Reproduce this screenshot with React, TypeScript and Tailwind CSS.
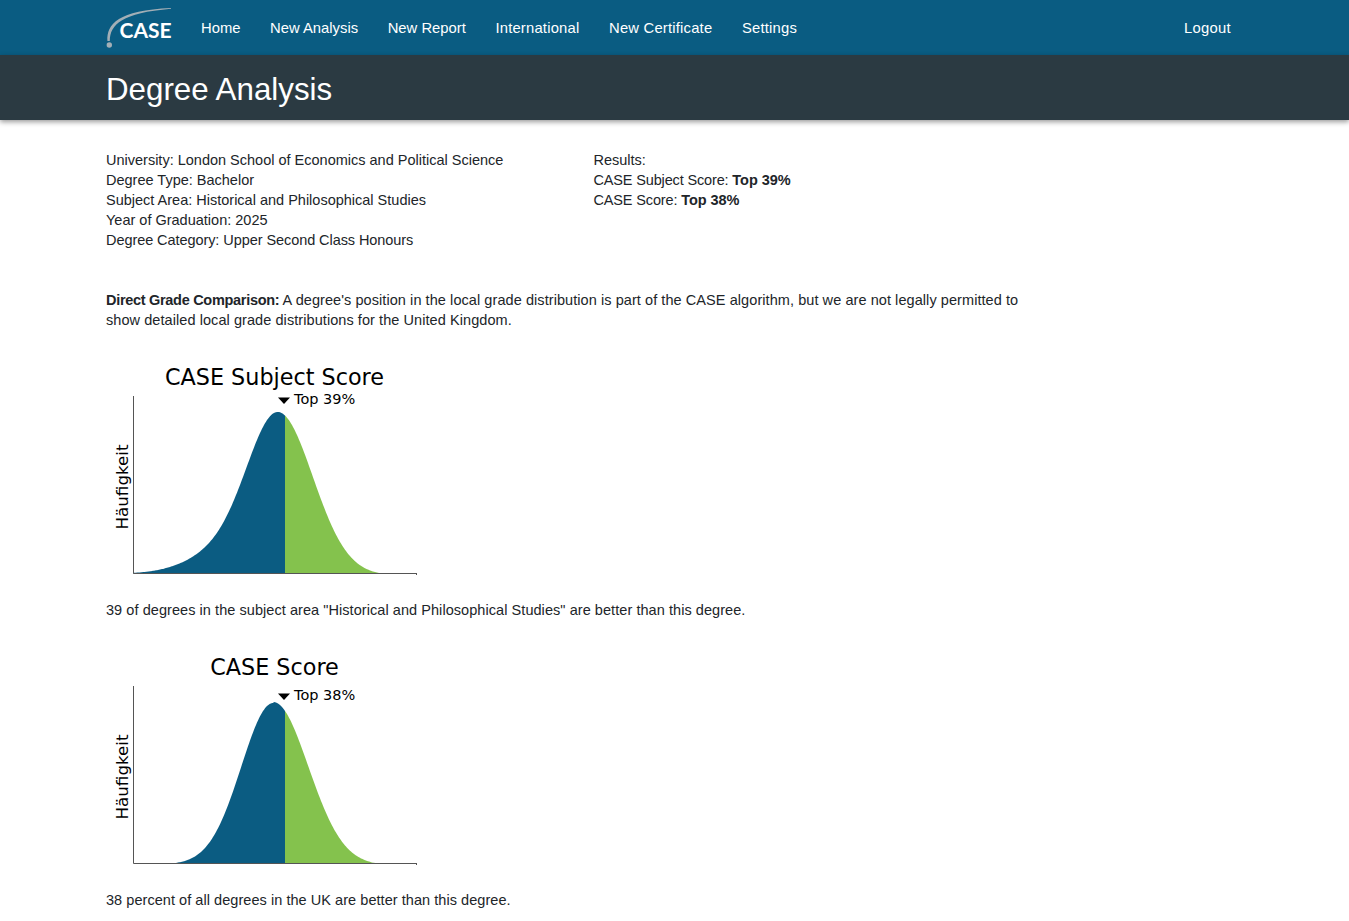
type Curve = { peak: number; sl: number; sr: number; amp: number; ampC: number; ampS: number };

function h(c: Curve, x: number) {
  const dx = x - c.peak;
  if (x >= c.peak) {
    const main = Math.exp((-dx * dx) / (2 * c.sr * c.sr));
    return Math.max(0, (main - 0.012) / 0.988);
  }
  const main = Math.exp((-dx * dx) / (2 * c.sl * c.sl));
  const t = c.amp * Math.exp((-(x - c.ampC) * (x - c.ampC)) / (2 * c.ampS * c.ampS)) * (1 - main);
  return Math.max(0, main + t - (c.amp ? 0 : 0.006));
}

function curve(c: Curve, from: number, to: number) {
  const base = 573.5;
  let d = "";
  for (let x = from; x <= to; x += 1) {
    d += `${d ? "L" : "M"}${x} ${(base - 161.5 * h(c, x)).toFixed(2)}`;
  }
  return d;
}

const c1: Curve = { peak: 277.7, sl: 33, sr: 35, amp: 0.085, ampC: 212, ampS: 32 };
const c2: Curve = { peak: 273.3, sl: 32, sr: 35, amp: 0, ampC: 212, ampS: 32 };

function Chart({ title, label, labelY, c }: { title: string; label: string; labelY: number; c: Curve }) {
  return (
    <svg width="330" height="230" viewBox="100 355 330 230" className="block -ml-[6px]" style={{ fontFamily: '"DejaVu Sans", sans-serif' }}>
      <path d={curve(c, 133, 285) + "L285 573.5L133 573.5Z"} fill="#0b5c82" />
      <path d={curve(c, 285, 395) + "L395 573.5L285 573.5Z"} fill="#84c24d" />
      <path d="M133.5 396V573.5H416.5M416.5 573V575" fill="none" stroke="#555" strokeWidth="1" />
      <text x="274.5" y="385" textAnchor="middle" fontSize="22.3" fill="#000">{title}</text>
      <text x="294" y={labelY} fontSize="14.5" fill="#000">{label}</text>
      <path d={`M278 ${labelY - 6.5}H290L284 ${labelY}Z`} fill="#000" />
      <text transform="translate(127.5 487) rotate(-90)" textAnchor="middle" fontSize="16.7" fill="#000">Häufigkeit</text>
    </svg>
  );
}

export default function App() {
  return (
    <div className="min-h-[921px] bg-white text-[#212529] text-[14.5px] leading-5" style={{ fontFamily: '"Liberation Sans", sans-serif' }}>
      <nav className="h-[55px] bg-[#0a5c82] text-white">
        <div className="ml-[91px] flex h-full w-[1155px] items-center px-[15px] text-[14.8px]">
          <svg width="66" height="42" viewBox="106 7 66 42" className="mr-[29px] shrink-0">
            <path d="M107.4 41C106.6 24 118 10.5 171 8L171 8.7C122 13 110.2 24 109.8 41Z" fill="#a3afb6" />
            <circle cx="109.3" cy="45" r="2.7" fill="#a3afb6" />
            <text x="119.5" y="38.3" fontSize="21" fontWeight="700" fill="#fff" style={{ fontFamily: 'Lato, sans-serif' }}>CASE</text>
          </svg>
          <div className="flex gap-[29.6px]">
            <a>Home</a><a>New Analysis</a><a>New Report</a>
            <a className="tracking-[0.2px]">International</a>
            <a className="tracking-[0.2px]">New Certificate</a>
            <a className="tracking-[0.2px]">Settings</a>
          </div>
          <a className="ml-auto tracking-[0.3px]">Logout</a>
        </div>
      </nav>
      <header className="h-[65px] bg-[#2b3a42] text-white shadow-[0_2px_5px_rgba(0,0,0,0.4)]">
        <div className="ml-[91px] w-[1155px] px-[15px] pt-[15px] text-[31.3px] leading-10">Degree Analysis</div>
      </header>
      <main className="ml-[91px] w-[1155px] px-[15px] pt-[30px]">
        <div className="flex">
          <div className="w-[487.5px]">
            <div>University: London School of Economics and Political Science</div>
            <div>Degree Type: Bachelor</div>
            <div>Subject Area: Historical and Philosophical Studies</div>
            <div>Year of Graduation: 2025</div>
            <div className="tracking-[-0.07px]">Degree Category: Upper Second Class Honours</div>
          </div>
          <div>
            <div>Results:</div>
            <div><span className="tracking-[-0.15px]">CASE Subject Score: </span><b className="tracking-[-0.05px]">Top 39%</b></div>
            <div><span className="tracking-[-0.15px]">CASE Score: </span><b className="tracking-[-0.05px]">Top 38%</b></div>
          </div>
        </div>
        <p className="mt-10 w-[925px] tracking-[0.07px]"><b className="tracking-[-0.3px]">Direct Grade Comparison:</b> A degree's position in the local grade distribution is part of the CASE algorithm, but we are not legally permitted to show detailed local grade distributions for the United Kingdom.</p>
        <div className="mt-[25px]">
          <Chart title="CASE Subject Score" label="Top 39%" labelY={404} c={c1} />
        </div>
        <p className="mt-[15px] tracking-[0.06px]">39 of degrees in the subject area "Historical and Philosophical Studies" are better than this degree.</p>
        <div className="mt-[25px]">
          <Chart title="CASE Score" label="Top 38%" labelY={410} c={c2} />
        </div>
        <p className="mt-[15px] tracking-[0.05px]">38 percent of all degrees in the UK are better than this degree.</p>
      </main>
    </div>
  );
}
